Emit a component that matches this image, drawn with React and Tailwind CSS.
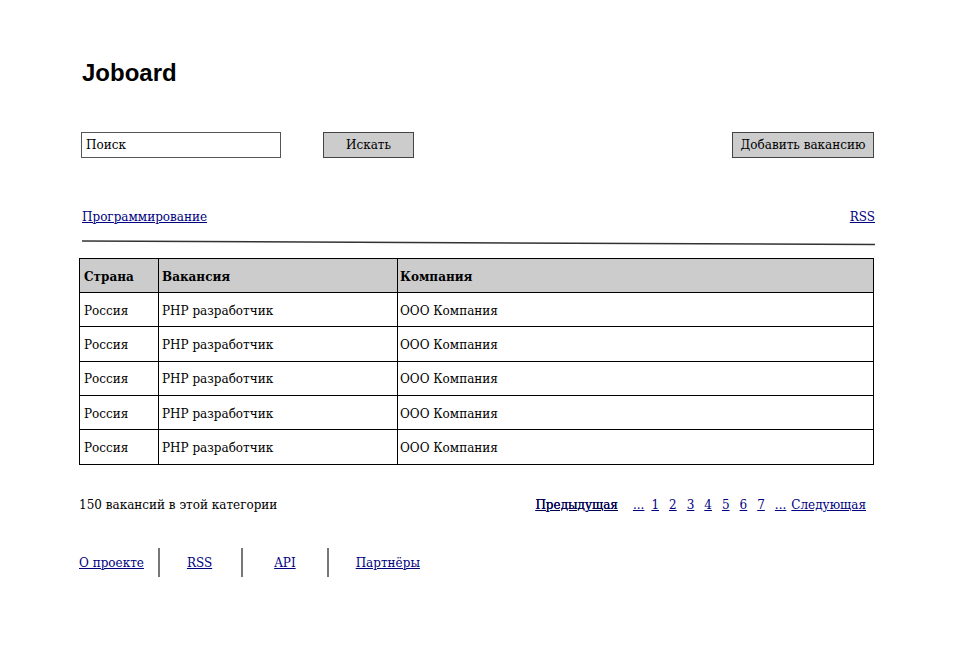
import React from 'react'

const rows = Array.from({ length: 5 }, () => ({ country: 'Россия', job: 'PHP разработчик', company: 'ООО Компания' }))
const pages = ['1', '2', '3', '4', '5', '6', '7', '...']

const App = () => {
    return (
        <div className="bg-white min-h-screen w-[964px] h-[658px] text-black text-[12px] font-['DejaVu_Serif',serif] relative">
            <div className="pl-[79px] pr-[89px] pt-[58px]">
                <h1 className="pl-[3px] text-[24px] font-bold leading-[30px] font-['Liberation_Sans',Arial,sans-serif]">Joboard</h1>

                <div className="mt-[44px] flex items-center h-[26px]">
                    <div className="ml-[2px] w-[200px] h-[26px] border border-[#555] flex items-center px-[4px]">Поиск</div>
                    <button className="ml-[42px] w-[91px] h-[26px] bg-[#cccccc] border border-[#444]">Искать</button>
                    <button className="ml-auto mr-[1px] w-[142px] h-[26px] bg-[#cccccc] border border-[#444]">Добавить вакансию</button>
                </div>

                <div className="mt-[51px] flex justify-between pl-[3px] leading-[17px]">
                    <a href="#" className="underline text-[#000080]">Программирование</a>
                    <a href="#" className="underline text-[#000080]">RSS</a>
                </div>

                <svg className="mt-[14px] block ml-[3px]" width="793" height="6" viewBox="0 0 793 6">
                    <line x1="0" y1="1" x2="793" y2="4.5" stroke="#333" strokeWidth="1.5" />
                </svg>

                <table className="mt-[12px] w-[795px] border-collapse border border-black">
                    <thead>
                        <tr className="bg-[#cccccc] h-[34px]">
                            <th className="w-[79px] border border-black text-left font-bold px-[4px] pt-[2px]">Страна</th>
                            <th className="w-[239px] border border-black text-left font-bold px-[3px] pt-[2px]">Вакансия</th>
                            <th className="border border-black text-left font-bold px-[2px] pt-[2px]">Компания</th>
                        </tr>
                    </thead>
                    <tbody>
                        {rows.map((row, i) => (
                            <tr key={i} className="h-[34.33px]">
                                <td className="border border-black px-[4px] pt-[2px]">{row.country}</td>
                                <td className="border border-black px-[3px] pt-[2px]">{row.job}</td>
                                <td className="border border-black px-[2px] pt-[2px]">{row.company}</td>
                            </tr>
                        ))}
                    </tbody>
                </table>

                <div className="mt-[32px] flex items-center h-[17px]">
                    <span>150 вакансий в этой категории</span>
                    <div className="ml-auto mr-[9px] flex items-center text-[#000080]">
                        <a href="#" className="underline mr-[15px] text-[#000050] [text-shadow:0_0_0.4px_#000050]">Предыдущая</a>
                        <a href="#" className="underline mr-[7px]">...</a>
                        {pages.map((p, i) => (
                            <a key={i} href="#" className="underline mr-[10px]">{p}</a>
                        ))}
                        <a href="#" className="underline ml-[-5px]">Следующая</a>
                    </div>
                </div>

                <div className="mt-[34px] flex items-center h-[30px] text-[#000080]">
                    <a href="#" className="underline">О проекте</a>
                    <span className="ml-[14px] w-[2px] h-[29px] bg-[#777]" />
                    <a href="#" className="underline ml-[27px]">RSS</a>
                    <span className="ml-[29px] w-[2px] h-[29px] bg-[#777]" />
                    <a href="#" className="underline ml-[31px]">API</a>
                    <span className="ml-[31px] w-[2px] h-[29px] bg-[#777]" />
                    <a href="#" className="underline ml-[27px]">Партнёры</a>
                </div>
            </div>
        </div>
    )
}

export default App
